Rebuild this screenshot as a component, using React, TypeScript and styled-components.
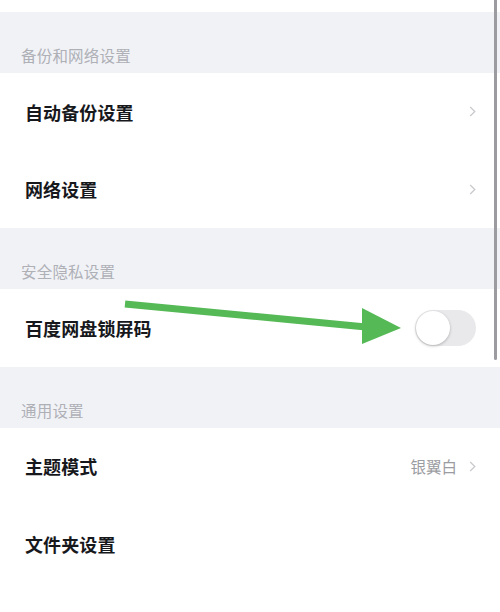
import React from "react";
import styled, { createGlobalStyle } from "styled-components";

const Global = createGlobalStyle`
  html, body { margin: 0; padding: 0; background: #ffffff; }
  body { font-family: "Noto Sans CJK SC", "Noto Sans", sans-serif; }
`;

const Page = styled.div`
  position: relative;
  width: 500px;
  height: 612px;
  overflow: hidden;
  background: #ffffff;
  display: flex;
  flex-direction: column;
`;

const TopStrip = styled.div`
  height: 12px;
  background: #ffffff;
`;

const SectionHeader = styled.div`
  height: 61px;
  background: #f1f2f6;
  display: flex;
  align-items: flex-end;
  padding: 0 0 7px 21px;
  box-sizing: border-box;
  font-size: 15.5px;
  color: #aeb0b6;
  letter-spacing: 0.2px;
`;

const Group = styled.div`
  background: #ffffff;
  display: flex;
  flex-direction: column;
`;

const Row = styled.div`
  height: 77.5px;
  display: flex;
  align-items: center;
  padding: 0 24px 0 25px;
  box-sizing: border-box;
`;

const Label = styled.div`
  flex: 1;
  font-size: 18px;
  font-weight: 700;
  color: #17181c;
  letter-spacing: 0.1px;
`;

const Value = styled.span`
  font-size: 15.5px;
  color: #9b9ca1;
  margin-right: 12px;
`;

const Chevron = styled.svg`
  width: 7px;
  height: 11px;
  display: block;
`;

const Toggle = styled.div`
  width: 61px;
  height: 36px;
  border-radius: 18px;
  background: #e9e9eb;
  position: relative;
`;

const Knob = styled.div`
  position: absolute;
  left: 1px;
  top: 1px;
  width: 34px;
  height: 34px;
  border-radius: 50%;
  background: #ffffff;
  box-shadow: 0 1px 3px rgba(0, 0, 0, 0.25);
`;

const Scrollbar = styled.div`
  position: absolute;
  right: 3px;
  top: 0;
  width: 3px;
  height: 360px;
  background: #9c9ca0;
  border-radius: 0 0 2px 2px;
`;

const Arrow = styled.svg`
  position: absolute;
  left: 0;
  top: 0;
  width: 500px;
  height: 612px;
  pointer-events: none;
`;

const ChevronIcon = () => (
  <Chevron viewBox="0 0 7 11">
    <path d="M1.2 1 L5.8 5.5 L1.2 10" fill="none" stroke="#c9cacd" strokeWidth="1.3" />
  </Chevron>
);

export default function App() {
  return (
    <>
      <Global />
      <Page>
        <TopStrip />
        <SectionHeader>备份和网络设置</SectionHeader>
        <Group>
          <Row>
            <Label>自动备份设置</Label>
            <ChevronIcon />
          </Row>
          <Row>
            <Label>网络设置</Label>
            <ChevronIcon />
          </Row>
        </Group>
        <SectionHeader>安全隐私设置</SectionHeader>
        <Group>
          <Row>
            <Label>百度网盘锁屏码</Label>
            <Toggle>
              <Knob />
            </Toggle>
          </Row>
        </Group>
        <SectionHeader>通用设置</SectionHeader>
        <Group>
          <Row>
            <Label>主题模式</Label>
            <Value>银翼白</Value>
            <ChevronIcon />
          </Row>
          <Row>
            <Label>文件夹设置</Label>
          </Row>
        </Group>
        <Scrollbar />
        <Arrow viewBox="0 0 500 612">
          <line x1="125" y1="304" x2="366" y2="327" stroke="#55b956" strokeWidth="7" />
          <polygon points="362,308 401,328 362,344" fill="#55b956" />
        </Arrow>
      </Page>
    </>
  );
}
